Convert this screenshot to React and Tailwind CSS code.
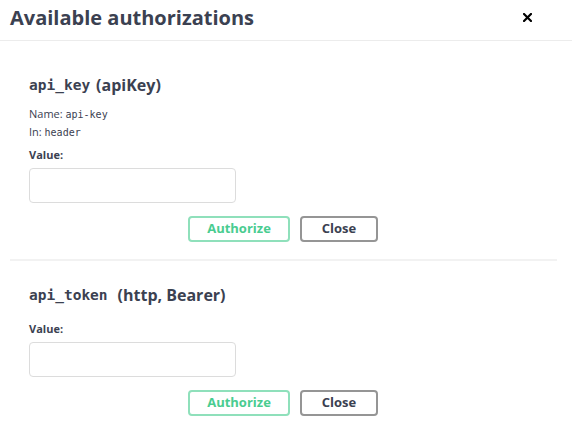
import React from "react";

const sans = { fontFamily: '"Open Sans", "Noto Sans", sans-serif' };
const mono = { fontFamily: '"DejaVu Sans Mono", monospace' };

function Buttons() {
  return (
    <div className="flex justify-center gap-[10px] pr-[1px]">
      <button className="h-[26px] w-[102px] rounded-[4px] border-2 border-[#8fe0bb] bg-white text-[13px] font-bold text-[#49cc90]">
        Authorize
      </button>
      <button className="h-[26px] w-[78px] rounded-[4px] border-2 border-[#959595] bg-white text-[13px] font-bold text-[#3b4151]">
        Close
      </button>
    </div>
  );
}

function Input() {
  return (
    <div className="mt-[5px] h-[35px] w-[207px] rounded-[4px] border border-[#dcdcdc] bg-white" />
  );
}

export default function App() {
  return (
    <div className="h-[445px] w-[572px] bg-white text-[#3b4151]" style={sans}>
      <div className="flex h-[41px] items-center justify-between border-b border-[#ececec] pl-[10px] pr-[40px]">
        <h3 className="text-[20px] font-bold leading-none text-[#3b4151] mt-[-4px]">Available authorizations</h3>
        <svg width="9" height="9" viewBox="0 0 9 9" className="mt-[-6px]">
          <path d="M1 1 L8 8 M8 1 L1 8" stroke="#000" strokeWidth="2.2" strokeLinecap="square" />
        </svg>
      </div>
      <div className="pl-[10px] pr-[15px]">
        <div className="pl-[19px] pt-[34px]">
          <h4 className="flex items-center h-[20px] text-[16px] font-bold leading-none">
            <code className="text-[14.5px] font-bold" style={mono}>api_key</code>
            <span className="ml-[6px]">(apiKey)</span>
          </h4>
          <div className="mt-[10px] h-[18px] overflow-visible text-[11px] leading-[18px] text-[#3b4151]">
            Name: <code style={mono} className="text-[10px] leading-none">api-key</code>
          </div>
          <div className="h-[18px] overflow-visible text-[11px] leading-[18px] text-[#3b4151]">
            In: <code style={mono} className="text-[10px] leading-none">header</code>
          </div>
          <div className="mt-[6px] text-[11px] font-bold leading-[16px]">Value:</div>
          <Input />
        </div>
        <div className="mt-[13px]">
          <Buttons />
        </div>
        <div className="mt-[17px] border-t-2 border-[#f2f2f2]" />
        <div className="pl-[19px] pt-[24px]">
          <h4 className="flex items-center h-[20px] text-[16px] font-bold leading-none">
            <code className="text-[14.5px] font-bold" style={mono}>api_token</code>
            <span className="ml-[10px]">(http, Bearer)</span>
          </h4>
          <div className="mt-[16px] text-[11px] font-bold leading-[16px]">Value:</div>
          <Input />
        </div>
        <div className="mt-[13px]">
          <Buttons />
        </div>
      </div>
    </div>
  );
}
